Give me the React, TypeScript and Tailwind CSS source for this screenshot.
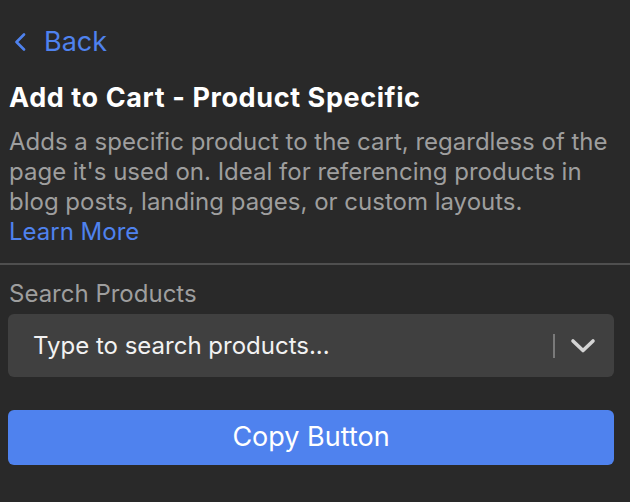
export default function App() {
  return (
    <div
      className="w-[630px] h-[502px] bg-[#292929] text-white"
      style={{ fontFamily: "Inter, 'Noto Sans', sans-serif" }}
    >
      <div className="pt-[27px] pl-2 pr-4">
        {/* Back link */}
        <button className="flex items-center gap-[18px] pl-[6px] text-[#4f82ee] text-[27px] leading-[30px]">
          <svg width="12" height="18" viewBox="0 0 12 18" fill="none">
            <polyline
              points="10,1.5 2.5,9 10,16.5"
              stroke="currentColor"
              strokeWidth="2.6"
              strokeLinecap="round"
              strokeLinejoin="round"
            />
          </svg>
          <span>Back</span>
        </button>

        <h1 className="mt-[25px] pl-[1px] text-[27px] leading-[32px] font-bold text-white tracking-[0.6px]">
          Add to Cart - Product Specific
        </h1>

        <p className="mt-[13px] pl-[1px] text-[24px] leading-[30px] text-[#9e9e9e]">
          Adds a specific product to the cart, regardless of the page it's used on. Ideal for referencing products in
          blog posts, landing pages, or custom layouts.
        </p>
        <a className="block pl-[1px] text-[24px] leading-[30px] text-[#4f82ee]">Learn More</a>
      </div>

      <div className="mt-[16px] h-[2px] bg-[#4f4f4f]" />

      <div className="pl-2 pr-4">
        <label className="block mt-[14px] pl-[1px] text-[24px] leading-[30px] text-[#9e9e9e]">
          Search Products
        </label>

        <div className="mt-[5px] h-[63px] rounded-md bg-[#404040] flex items-center pl-[25px] pr-[18px]">
          <span className="flex-1 text-[24px] text-[#f2f2f2]">Type to search products...</span>
          <div className="w-[2px] h-[24px] bg-[#7a7a7a]" />
          <svg className="ml-[15px]" width="26" height="16" viewBox="0 0 26 16" fill="none">
            <polyline
              points="3,3 13,12.5 23,3"
              stroke="#d4d4d4"
              strokeWidth="3.6"
              strokeLinecap="round"
              strokeLinejoin="round"
            />
          </svg>
        </div>

        <button className="mt-[33px] w-full h-[55px] rounded-md bg-[#4f82ee] text-white text-[27px]">
          Copy Button
        </button>
      </div>
    </div>
  );
}
